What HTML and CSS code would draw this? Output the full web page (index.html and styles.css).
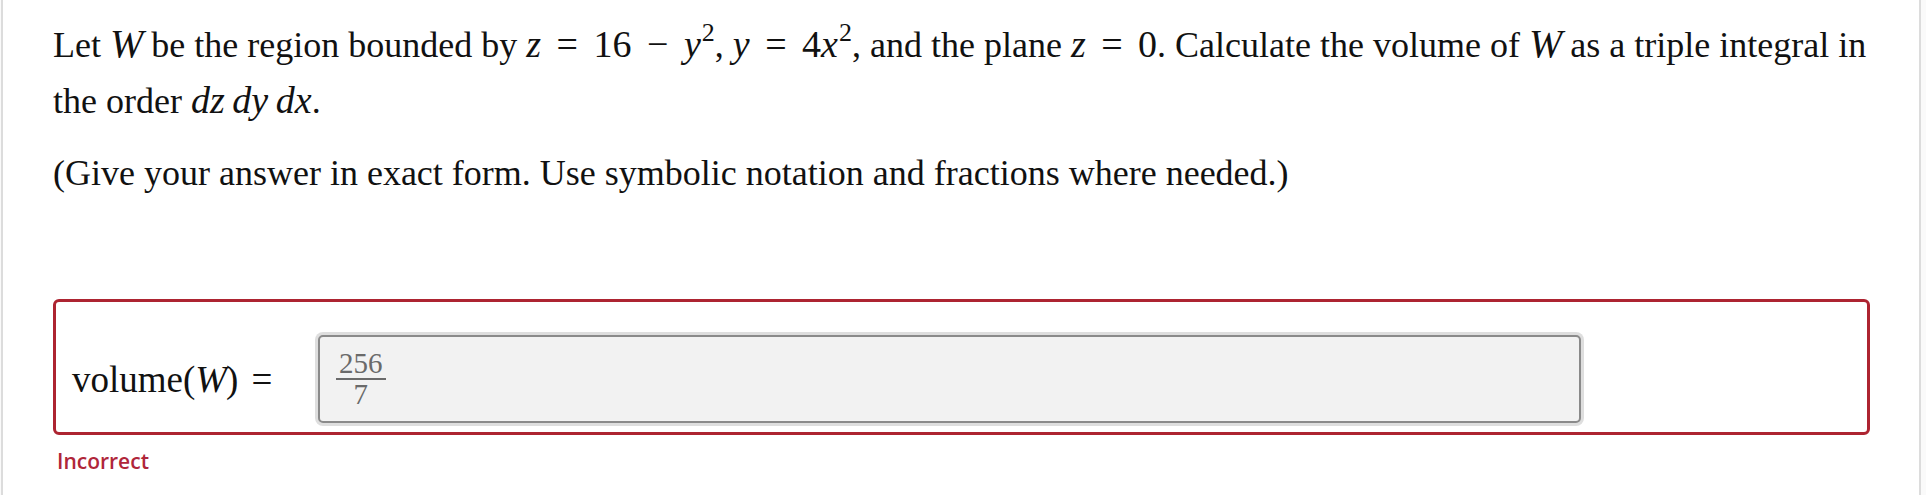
FILE: index.html
```html
<!DOCTYPE html>
<html>
<head>
<meta charset="utf-8">
<link rel="stylesheet" href="styles.css">
</head>
<body>
<div class="frame">
  <p class="q line1">Let <span class="cal">W</span> be the region bounded by <span class="m"><i>z</i> <span class="op">=</span> 16 <span class="op">−</span> <i>y</i><sup>2</sup></span>, <span class="m"><i>y</i> <span class="op">=</span> 4<i>x</i><sup>2</sup></span>, and the plane <span class="m"><i>z</i> <span class="op">=</span> 0</span>. Calculate the volume of <span class="cal">W</span> as a triple integral in<br>the order <span class="m"><i>dz</i>&#8201;<i>dy</i>&#8201;<i>dx</i></span>.</p>
  <p class="q line3">(Give your answer in exact form. Use symbolic notation and fractions where needed.)</p>
  <div class="answer">
    <div class="label">volume(<span class="cal">W</span>) <span class="eq">=</span></div>
    <div class="input">
      <span class="frac"><span class="num">256</span><span class="den">7</span></span>
    </div>
  </div>
  <div class="status">Incorrect</div>
</div>
</body>
</html>
```
FILE: styles.css
```css
html, body {
  margin: 0;
  padding: 0;
  background: #fafafa;
}
.frame {
  width: 1920px;
  height: 495px;
  margin-left: 1px;
  box-sizing: border-box;
  background: #fff;
  border-left: 2px solid #dcdcdc;
  border-right: 2px solid #dcdcdc;
  padding: 16px 0 0 50px;
  font-family: "Liberation Serif", "Times New Roman", serif;
  color: #111;
}
.q {
  margin: 0;
  font-size: 36px;
  line-height: 56px;
}
.line3 {
  margin-top: 16px;
}
.m i, .cal {
  font-style: italic;
}
.m {
  font-size: 38px;
  line-height: 0;
}
.op {
  padding: 0 6px;
}
sup {
  font-size: 26px;
  line-height: 0;
  vertical-align: 16px;
  margin-left: 1px;
}
.cal {
  font-family: "Liberation Serif", serif;
  font-size: 40px;
  letter-spacing: -1px;
}
.answer {
  margin-top: 98px;
  width: 1817px;
  height: 136px;
  box-sizing: border-box;
  border: 3px solid #ad2431;
  border-radius: 6px;
  display: flex;
  align-items: flex-start;
  padding: 33px 0 0 16px;
}
.label {
  font-size: 37px;
  height: 88px;
  display: flex;
  align-items: center;
  width: 246px;
  white-space: pre;
}
.label .cal {
  font-size: 38px;
}
.eq {
  margin-left: 4px;
}
.input {
  width: 1263px;
  height: 88px;
  box-sizing: border-box;
  border: 2px solid #8a8a8a;
  border-radius: 5px;
  background: #f2f2f2;
  box-shadow: 0 0 0 3px #dedede;
  display: flex;
  align-items: center;
  padding-left: 16px;
}
.frac {
  display: inline-flex;
  flex-direction: column;
  align-items: center;
  font-size: 29px;
  color: #6a6a6a;
  line-height: 24px;
  margin-top: -2px;
}
.num {
  padding: 0 3px 3px;
  border-bottom: 2px solid #6a6a6a;
}
.den {
  padding-top: 2px;
}
.status {
  margin: 12px 0 0 4px;
  font-family: "Open Sans", sans-serif;
  font-weight: 600;
  font-size: 21px;
  color: #b0263a;
}
```
